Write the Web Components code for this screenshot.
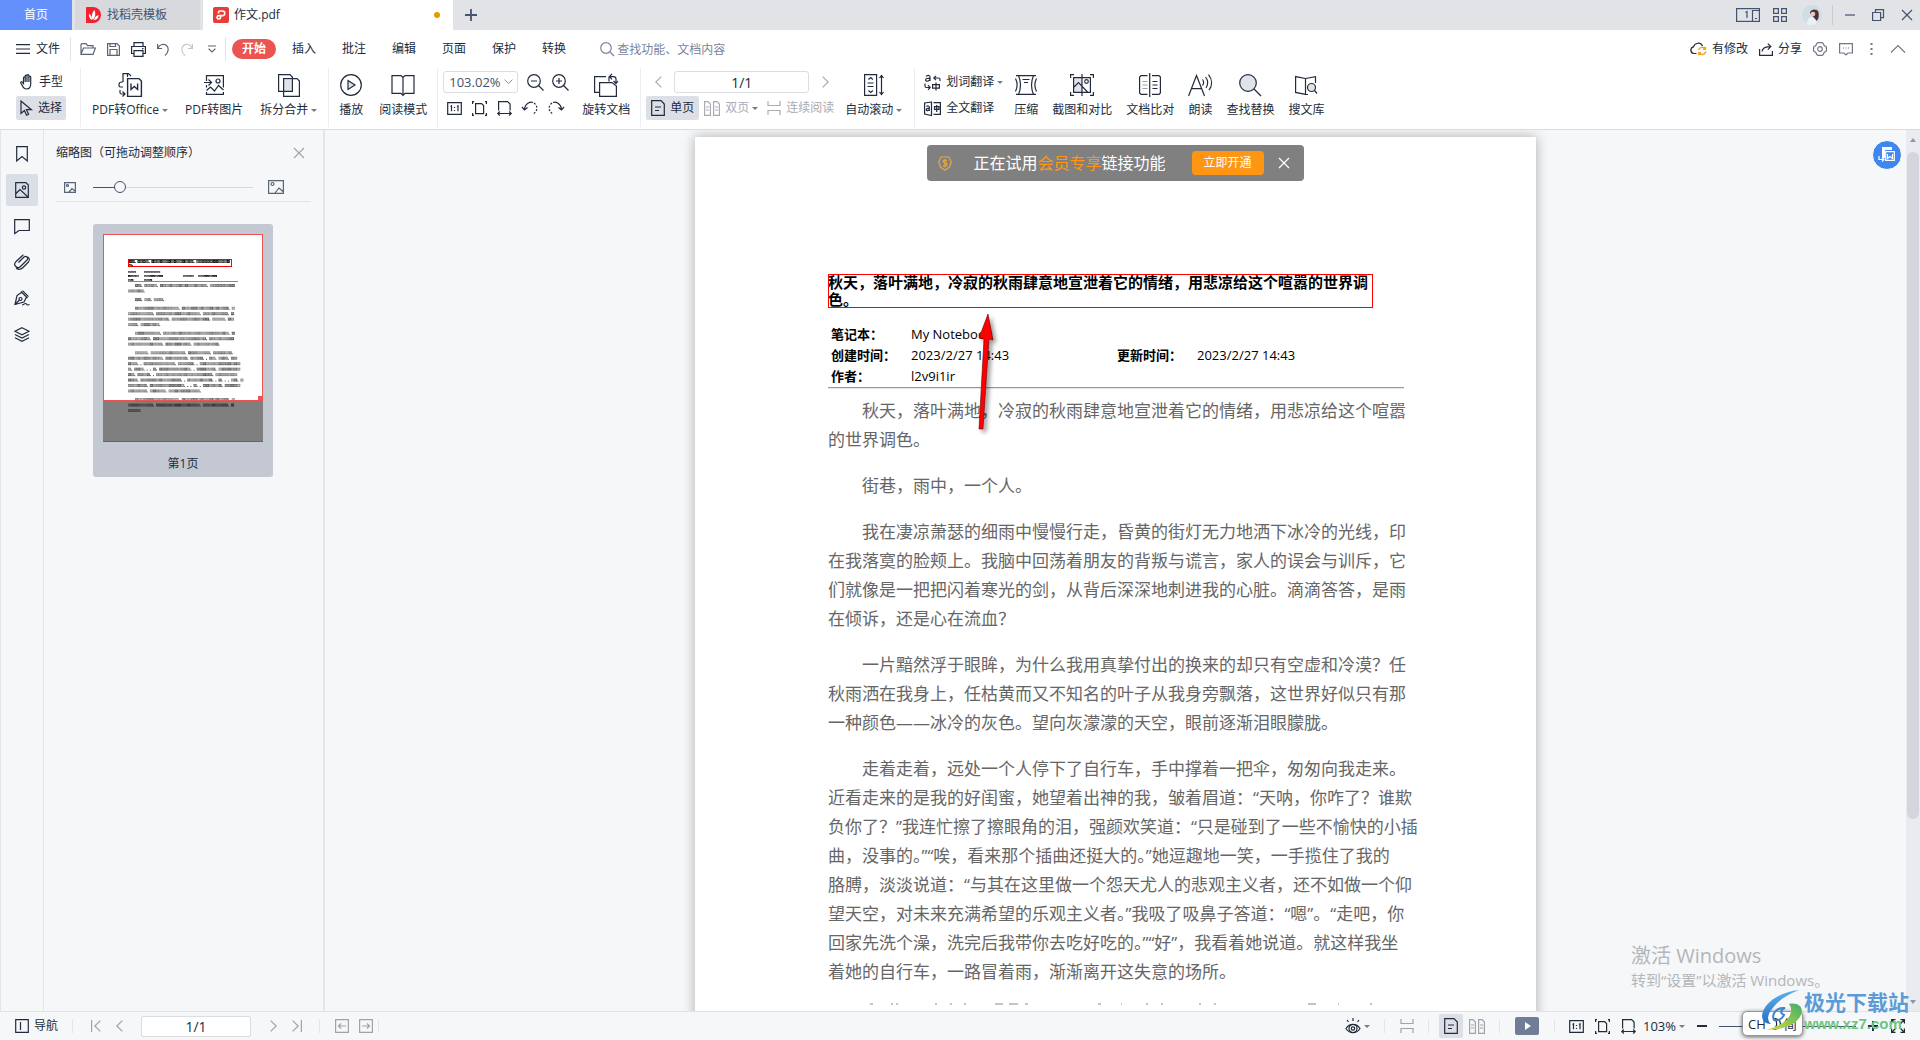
<!DOCTYPE html>
<html lang="zh-CN">
<head>
<meta charset="utf-8">
<title>作文.pdf</title>
<style>
html,body{margin:0;height:100%;overflow:hidden}
body{font:12px/16px "Open Sans","Noto Sans CJK SC",sans-serif;color:#222b3c;background:#f5f7f9}
</style>
</head>
<body>
<pdf-app></pdf-app>
<script>
const RESET = `*{box-sizing:border-box}
button,input,select{font:inherit;color:inherit;margin:0;padding:0;border:0;background:none;border-radius:0}
input,select{outline:0}`;

function define(tag, css, html, after) {
  customElements.define(tag, class extends HTMLElement {
    connectedCallback() {
      if (this.shadowRoot) return;
      const t = document.createElement('template');
      t.innerHTML = `<style>${RESET}${css}</style>${typeof html === 'function' ? html(this) : html}`;
      this.attachShadow({ mode: 'open' }).append(t.content.cloneNode(true));
      if (after) after(this.shadowRoot, this);
    }
  });
}

/* name: [width, height, drawing] */
const ICONS = {
  docer: [16,16,'<path d="M1 0h6a8 8 0 0 1 0 16H0V1a1 1 0 0 1 1-1z" fill="#f5222d" stroke="none"/><path d="M7 13C5 11 5.500 6 8.500 3c1.500 3 1 7-1.500 10zM6 13C3.500 12 2.500 9 3 6.500 5 8 6 10 6 13zM8 13c.5-2.500 2-4.500 4.500-5C12.500 11 10.500 13 8 13z" fill="#fff" stroke="none"/>'],
  pdf: [16,16,'<rect width="16" height="16" rx="2" fill="#e93c37" stroke="none"/><path d="M5.500 6.500v-1A1.500 1.500 0 0 1 7 4h2.500a2.300 2.300 0 0 1 0 4.600H5.800A1.700 1.700 0 1 0 7.500 10.300V8.600" stroke="#fff" stroke-width="1.600"/>'],
  plus: [12,12,'<path d="M6 0v12M0 6h12" stroke="#44536e" stroke-width="1.800"/>'],
  pages: [24,14,'<rect x=".6" y=".6" width="22.800" height="12.800"/><path d="M16.500 13.500v-11h6.500M19 10.500h2M9.500 4.500L11 3.500v6.500"/>'],
  grid: [14,14,'<path d="M.6.6h4.800v4.800H.6zM8.600.6h4.800v4.800H8.600zM.6 8.600h4.800v4.800H.6zM8.600 8.600h4.800v4.800H8.600z"/>'],
  avatar: [20,20,'<circle cx="10" cy="10" r="10" fill="#cfdde4" stroke="none"/><path d="M8 8c0-4 7-5 8.500-1 .5 4 .5 7-2 9l-3-4z" fill="#4b3138" stroke="none"/><circle cx="11" cy="9" r="2.300" fill="#eccabb" stroke="none"/><path d="M5 19c0-5 2-7 5-7l4 3 1 3a10 10 0 0 1-10 1z" fill="#e9f2f5" stroke="none"/><path d="M13 4h2v1h-2z" fill="#e2bb4b" stroke="none"/>'],
  min: [10,10,'<path d="M0 5h10"/>'],
  restore: [12,12,'<path d="M.6 3.500h8v8h-8zM3.500 3.500V.6h8v8H8.600"/>'],
  close: [10,10,'<path d="M0 0l10 10M10 0L0 10"/>'],
  menu: [14,10,'<path d="M0 .6h14M0 5h14M0 9.400h14"/>'],
  open: [16,12,'<path d="M1 11V1.500L2 .6h4l1.500 2H13v2.500M1 11l2.500-6H15.400L13 11.400H1z"/>'],
  save: [13,13,'<path d="M.6.6h9.400l2.400 2.400v9.400H.6zM3 12V6.500h7V12M3 .6v2.900h5.500V.6"/>'],
  print: [15,15,'<path d="M3 4.500V.6h9v3.900M3 11.500H.6v-7h13.800v7H12M3 8.600h9v5.800H3zM11 6.600h1.500"/>'],
  undo: [12,13,'<path d="M.6 1v4.500h4.500M1 5c2-4 6-4.500 8.500-2.500S12 9 8 12.500"/>'],
  redo: [12,13,'<path d="M11.400 1v4.500H6.900M11 5C9 1 5 .5 2.500 2.500S0 9 4 12.500"/>'],
  more: [8,8,'<path d="M0 1h8M.6 3.600L4 7l3.400-3.400"/>'],
  search: [14,14,'<circle cx="6" cy="6" r="5.300"/><path d="M10 10l4 4"/>'],
  cloud: [17,14,'<path d="M6.500 11.500H4A3.400 3.400 0 0 1 3.500 4.800 4.800 4.800 0 0 1 12.500 4"/><path d="M8.500 8a3.800 3.800 0 0 1 6.800-1M15.500 4.800V7.300H13M15.800 9.500a3.800 3.800 0 0 1-6.800 1.500M8.800 13.300v-2.500h2.400" stroke="#f5a51c" stroke-width="1.400"/>'],
  share: [14,13,'<path d="M.6 6v6.400h12.800V8M3 8.500C3.500 5 6 3.600 11.500 3.600M8.800.6l3 3-3 3"/>'],
  gear: [14,14,'<path d="M4 1.200L5 .6h4l1 .6 1.200 2.300 2.200 1.500v4L11.200 10.500 10 12.800l-1 .6H5l-1-.6-1.200-2.300L.6 9V5l2.200-1.500z"/><circle cx="7" cy="7" r="2.300"/>'],
  chat: [14,13,'<path d="M.6.6h12.800v9.400H9l-2 2-2-2H.6zM4 5h1M6.500 5h1M9 5h1"/>'],
  dots: [3,12,'<path d="M.5 1h2M.5 6h2M.5 11h2" stroke-width="2"/>'],
  up: [14,8,'<path d="M0 7.500L7 .6l7 6.900"/>'],
  hand: [14,16,'<path d="M3.500 9.500V3.800c0-1 1.700-1 1.700 0V2c0-1.200 1.800-1.200 1.800 0v-.4c0-1.200 1.900-1.200 1.900 0V3c0-1 1.800-1 1.800 0v7c0 3-1.500 5-4.200 5-2 0-3-1-4-3L.8 9c-.4-1 1-1.700 1.700-.7zM5.200 3.800V8M7 2v6M8.900 3v5"/>'],
  cursor: [13,16,'<path d="M1 1v12.500l3.400-3 2.200 4.700 2-1-2.200-4.500h5z"/>'],
  office: [24,24,'<path d="M9.500 4V.6H5V9M5 9H3.500A2.500 2.500 0 0 0 1 11.500V13a2 2 0 0 0 2 1h2M13 3L10.500.6H8M2 17v2.500a1.500 1.500 0 0 0 1.500 1.500h3M4.500 18.500L7 21l-2.500 2.500" /><path d="M9.600 5.600H21l2.400 2.400v15.400H9.600zM13 10.500v6l3.300-3 3.300 3v-6" stroke-width="1.400"/>'],
  toimg: [20,20,'<path d="M2.500 6V.6h16.900v11.900M2.500 10v2.500M2.500 17v2.400h16.900V17M0 7.500h7M4.500 4.500l3 3-3 3M2.500 15.500l4-3.500 4 4 4-5.500 5 4.500"/><circle cx="14" cy="6" r="2"/>'],
  split: [24,24,'<path d="M7 7h8v11H7z" fill="#dfe3ea" stroke="none"/><path d="M1.600 1.600H13L15.400 4v14.400H1.600zM6.600 5.600H20L22.400 8v15.400H6.600z"/>'],
  play: [22,22,'<circle cx="11" cy="11" r="10.300"/><path d="M8 6.500L15 11l-7 4.500z" fill="#dfe3ea"/>'],
  read: [24,22,'<path d="M12 3.500L10 1.600H1v17.800h9l2 2 2-2h9V1.600h-9zM12 3.500v18"/>'],
  zoomout: [17,17,'<circle cx="7" cy="7" r="6.300"/><path d="M11.500 11.500l5 5M4 7h6"/>'],
  zoomin: [17,17,'<circle cx="7" cy="7" r="6.300"/><path d="M11.500 11.500l5 5M4 7h6M7 4v6"/>'],
  one: [15,13,'<path d="M.7.7h13.600v11.600H.7zM3.500 4.500l1-.6v5.300M10 4.500l1-.6v5.300M7.500 5v1M7.500 8v1"/>'],
  fit: [15,15,'<path d="M3.600 2.600h6l2 2v8h-8zM.6 3V.6H2M13 .6h1.400V3M.6 12v2.400H2M13 14.400h1.400V12"/>'],
  fitw: [15,15,'<path d="M1.600 9.500V.6h9l2.500 2.500v6.400M.6 12.500h13.800M2.800 10.500l-2 2 2 2M12.200 10.500l2 2-2 2"/>'],
  rotl: [16,14,'<path d="M2.500 8.500C3 2 8.500.6 11 1.500M0 6l2.500 3L5.500 6.500"/><path d="M12 2c4 3 4 8-1 11" stroke-dasharray="2 1.500"/>'],
  rotr: [16,14,'<path d="M13.500 8.500C13 2 7.500.6 5 1.500M16 6l-2.500 3-3-2.500"/><path d="M4 2c-4 3-4 8 1 11" stroke-dasharray="2 1.500"/>'],
  rotdoc: [24,24,'<path d="M5 19.400H.6V3.600H12M15 3.600v5M5.600 9.600H18L22.400 13v10.400H5.600zM16 3.600h3.500a2.500 2.500 0 0 1 2.500 2.500V10M18 .8l-2.500 2.800L18 6.400M19.500 8l2.500 2.500L24 8"/>'],
  prev: [7,12,'<path d="M6.400.6L.8 6l5.600 5.400"/>'],
  next: [7,12,'<path d="M.6.6L6.200 6 .6 11.400"/>'],
  first: [10,12,'<path d="M.6 0v12M9.400.6L3.800 6l5.600 5.400"/>'],
  last: [10,12,'<path d="M9.400 0v12M.6.6L6.200 6 .6 11.400"/>'],
  single: [14,16,'<path d="M.7.7H10L13.300 4v11.300H.7zM4 7h6M4 10.500h4"/>'],
  dual: [16,15,'<path d="M.6.6h3.400L6.400 3v11.400H.6zM9.600.6H13L15.400 3v11.400H9.600zM2 6h3M2 9h3M11 6h3M11 9h3"/>'],
  cont: [14,14,'<path d="M1 0v4.500h12V0M1 14V9.500h12V14"/>'],
  scroll: [20,22,'<path d="M.6.6h12v20.800H.6zM3.500 9h6M3.500 12.500h6M4.500 5.500l2.200-2 2.200 2M4.500 16.500l2.200 2 2.200-2M17.500 1.500v19M15.500 4l2-2.500 2 2.500M15.500 18l2 2.500 2-2.500"/>'],
  trans: [17,17,'<path d="M2 2.500C3 .8 6 .8 6 3v4M6 4.500C3.500 4 1.600 4.500 1.600 6c0 2 4 1.500 4.400-1M16 7V5.500A1.500 1.500 0 0 0 14.500 4H10M12 1.800L9.800 4 12 6.200M1 9.500V12a1.500 1.500 0 0 0 1.500 1.500H6M4 11.200l2.200 2.300L4 15.800M8.600 10.600h6.800v3.500H8.600zM12 8.500v8"/>'],
  trans2: [17,15,'<path d="M7.500 1L.6 2v11l6.900 1.500zM9.500 1.600h6.900v11.800H9.500M2.500 5.500c1-1 2.800-.5 2.800.8V10M5.300 7.500c-2-.3-3 .2-3 1.200 0 1.500 2.800 1.200 3-.7M10.500 5.600h4.400v2.800h-4.400zM12.700 4v7"/>'],
  zip: [24,22,'<path d="M2 1.600h20M2 20.400h20M4.500 1.600c2.500 6 2.500 13 0 18.800M19.500 1.600c-2.500 6-2.500 13 0 18.800M1.500 4.500c2 4 2 9 0 13M22.500 4.500c-2 4-2 9 0 13M8.500 5.500h7M10 8.500h4"/>'],
  shot: [24,22,'<path d="M3 4h9v15H3z" fill="#dfe3ea" stroke="none"/><path d="M.6 4V.6H4M20 .6h3.400V4M.6 18v3.400H4M20 21.400h3.400V18M3.600 3.600h16.800v14.800H3.600zM12 0v22M4 13l4.500-4.500 9.500 10"/><circle cx="16.500" cy="7.500" r="1.800"/>'],
  compare: [22,24,'<path d="M8.500 2.600H2l-1.400 1.400v16L2 21.400h6.500M13 2.600h7L21.400 4v16L20 21.400h-7M10.700 0v24"/><path d="M3.500 8.500h5M3.500 12h5M3.500 15.500h5" stroke="#9aa1ad"/><path d="M13.500 8.500h5M13.500 12h5M13.500 15.500h5"/>'],
  speak: [24,22,'<path d="M.6 22L8.500 1.500 16.500 22M3.500 14.600H14M14.500 5.500c1.500 2 1.500 4 0 6M17.500 3c2.800 3.500 2.800 7.500.5 11M20.500.6c4 5 4 11 .5 15.500"/>'],
  find: [22,22,'<circle cx="9" cy="9" r="8.300" fill="#dfe3ea"/><path d="M15 15l7 7"/>'],
  lib: [22,20,'<path d="M10.500 3.500L.6 1.600v15.800l9.900 2M10.500 3.500l10-1.900V8M10.500 3.500v16H13"/><circle cx="16.500" cy="12.500" r="4" fill="#dfe3ea"/><path d="M19.500 15.500l2.500 3"/>'],
  mark: [12,16,'<path d="M.7.7h10.600v14.300L6 10.500.7 15z"/>'],
  thumb: [14,16,'<path d="M.7.700H11l2.300 2.300v12.300H.7zM1 11.500L5 7.500l8 7.500"/><circle cx="9" cy="5.500" r="1.700"/>'],
  note: [16,15,'<path d="M.7.7h14.600v10.800H5L.7 14.500z"/>'],
  clip: [16,16,'<path d="M4.500 8.500l5.500-5.500a2 2 0 0 1 3 3l-6.500 6.500a3.300 3.300 0 0 1-4.700-4.700L8.500 1.500a3 3 0 0 1 1-.8M12 2.500c3 .5 4.500 3 2.500 5.500l-6 6c-2 2-5 1.500-6.500 0"/>'],
  pen: [16,16,'<path d="M7 1.500l6.500 6.500M8.500.6l6 6M7.500 2.500L3 5.500 1 14.500l9-2.500 2.500-5M1 14.500l4.500-4.500"/><circle cx="6.500" cy="9" r="1.500"/><path d="M8 15c2 0 2-1.500 3.500-1.500s1 1.500 2 1.500 1-.5 2-.5"/>'],
  layers: [16,15,'<path d="M8 .7l7 3.600-7 3.600-7-3.600zM1 7.500l7 3.600 7-3.600M1 10.700l7 3.600 7-3.600"/>'],
  pic: [12,11,'<path d="M.6.6h10.800v9.800H.6zM4.500 10.500l3.500-4 3 2.500" /><circle cx="3.500" cy="3.500" r="1"/>'],
  picbig: [16,14,'<path d="M.6.6h14.800v12.800H.6zM7 13l4-5 4 3.500"/><circle cx="4.500" cy="4" r="1.500"/>'],
  nav: [14,14,'<path d="M.7.7h12.600v12.600H.7zM5.500 3v8"/>'],
  back: [14,14,'<path d="M.6.6h12.800v12.800H.6zM11 7H3.500M6 4.500L3.500 7 6 9.500"/>'],
  fwd: [14,14,'<path d="M.6.6h12.800v12.800H.6zM3 7h7.500M8 4.500L10.500 7 8 9.500"/>'],
  eye: [16,16,'<path d="M1 10.500c3.500-5.500 10.500-5.500 14 0-3.500 5.500-10.500 5.500-14 0zM8 3V0M3.500 4L2 2M12.500 4L14 2"/><circle cx="8" cy="10.500" r="4"/><circle cx="8" cy="10.500" r="1.700"/>'],
  present: [24,18,'<rect width="24" height="18" rx="2" fill="#717c96" stroke="none"/><path d="M10 5l6 4-6 4z" fill="#fff" stroke="none"/>'],
  minus2: [10,10,'<path d="M0 5h10" stroke-width="2"/>'],
  plus2: [10,10,'<path d="M0 5h10M5 0v10" stroke-width="2"/>'],
  full: [14,14,'<path d="M.6 4.500V.6h3.900M9.500.6h3.900v3.900M.6 9.500v3.900h3.900M9.500 13.400h3.900V9.500M1 1l4 4M13 1L9 5M1 13l4-4M13 13L9 9"/>'],
  coin: [14,15,'<path d="M3 1h8l2.300 5-1.800 5L7 14.300 2.500 11 .7 6z"/><path d="M9 4.800C7.500 3.500 5 4 5.200 5.700c.3 1.600 3.600 1 3.700 2.700.1 1.700-2.500 2-3.900.8M7 3v8.500" stroke-width="1.300"/>'],
  swap: [18,16,'<path d="M4 0h10v3H7v8H4z" fill="#fff" stroke="none"/><path d="M7.700 4.700h8.600v8.600H7.700z" stroke="#fff"/><path d="M9.500 7v4.500l2.500-2 2.500 2V7M1 9v3.500h4M4 10.500l2 2-2 2" stroke="#fff"/>'],
  moon: [12,12,'<path d="M6 .6C9 1 11.400 3 11.400 6S9 11.400 5 11c2.500-1.500 4-6 1-10.400z"/>']
};
define('ui-icon', ':host{display:inline-flex;flex:none}svg{display:block;overflow:visible}', el => {
  const [w, h, d] = ICONS[el.getAttribute('name')];
  return `<svg width="${w}" height="${h}" viewBox="0 0 ${w} ${h}" fill="none" stroke="currentColor" stroke-width="1.200" aria-hidden="true">${d}</svg>`;
});
define('ui-sep', ':host{display:block;flex:none;width:1px;align-self:stretch;background:#e3e5ea}', '');
define('ui-caret', ':host{display:inline-block;flex:none;border:3px solid transparent;border-top:3px solid #717c96;border-bottom:0;margin-left:3px}', '');

/* Small button: icon and text in a row */
define('ui-button', `:host{display:flex;flex:none}
button{display:flex;align-items:center;gap:var(--gap,6px);height:24px;padding:0 var(--pad,0);white-space:nowrap;border-radius:2px}
:host([active]) button{background:#dce0e6}`,
  el => `<button type="button" aria-label="${el.getAttribute('label') || el.textContent.trim()}">${el.hasAttribute('icon') ? `<ui-icon name="${el.getAttribute('icon')}"></ui-icon>` : ''}<slot></slot></button>`);

/* Large ribbon button: icon above its caption */
define('ribbon-button', `:host{display:flex;flex:none}
button{display:flex;flex-direction:column;align-items:center;gap:5px;padding:5px 7px 0}
.i{display:flex;align-items:center;height:24px}
.l{display:flex;align-items:center;white-space:nowrap}`,
  el => `<button type="button"><span class="i"><ui-icon name="${el.getAttribute('icon')}"></ui-icon></span><span class="l"><slot></slot>${el.hasAttribute('menu') ? '<ui-caret></ui-caret>' : ''}</span></button>`);

define('tab-bar', `:host{display:flex;height:30px;background:#e2e3e7;color:#44536e}
.tab{display:flex;align-items:center;gap:5px;height:30px;text-align:left}
.home{width:72px;justify-content:center;background:#6490fb;color:#fff;margin-right:3px}
.docer{width:125px;padding-left:11px;background:#d8d9dd;margin-right:3px}
.doc{width:250px;padding:0 13px 0 10px;background:#fff;color:#222b3c}
.dot{width:6px;height:6px;border-radius:3px;background:#e79a00;margin-left:auto}
.add{padding:0 12px}
.win{display:flex;align-items:center;margin-left:auto;padding-right:8px}
.win button{display:flex}
ui-sep{height:20px;align-self:center;margin:0 12px 0 10px;background:#c9cbd1}`,
`<button class="tab home">首页</button>
<button class="tab docer"><ui-icon name="docer"></ui-icon>找稻壳模板</button>
<button class="tab doc"><ui-icon name="pdf"></ui-icon>作文.pdf<span class="dot"></span></button>
<button class="tab add" aria-label="新建"><ui-icon name="plus"></ui-icon></button>
<div class="win"><button aria-label="窗口" style="margin-right:13px"><ui-icon name="pages"></ui-icon></button><button aria-label="应用" style="margin-right:15px"><ui-icon name="grid"></ui-icon></button><button aria-label="账号"><ui-icon name="avatar"></ui-icon></button><ui-sep></ui-sep>
<button aria-label="最小化" style="margin-right:17px"><ui-icon name="min"></ui-icon></button><button aria-label="还原" style="margin-right:18px"><ui-icon name="restore"></ui-icon></button><button aria-label="关闭"><ui-icon name="close"></ui-icon></button></div>`);

define('menu-bar', `:host{display:flex;align-items:center;height:38px;padding:0 15px 0 16px;background:#fff}
ui-sep{height:24px;align-self:center}
.quick{display:flex;align-items:center;gap:11px;margin:0 9px;color:#5a6477}
.quick ui-button:nth-child(3){color:#222b3c}
.quick ui-button:nth-child(5){color:#c3c6cc;margin-left:1px}
.quick ui-button:nth-child(6){margin-left:4px}
nav{display:flex;align-items:center;gap:26px}
nav button{white-space:nowrap}
.on{height:20px;padding:0 10px;border-radius:10px;background:#eb5451;color:#fff;font-weight:700;margin:0 -10px 0 6px}
.search{display:flex;align-items:center;gap:3px;margin-left:34px;color:#7a849b}
.search input{width:150px;height:20px}
.search input::placeholder{color:#7a849b;opacity:1}
.right{display:flex;align-items:center;margin-left:auto;gap:11px;--gap:5px}
.soft{display:flex;align-items:center;color:#717784}`,
`<ui-button icon="menu" style="margin-right:10px">文件</ui-button><ui-sep></ui-sep>
<div class="quick"><ui-button icon="open" label="打开"></ui-button><ui-button icon="save" label="保存"></ui-button><ui-button icon="print" label="打印"></ui-button><ui-button icon="undo" label="撤销"></ui-button><ui-button icon="redo" label="恢复"></ui-button><ui-button icon="more" label="更多"></ui-button></div><ui-sep></ui-sep>
<nav><button class="on">开始</button><button>插入</button><button>批注</button><button>编辑</button><button>页面</button><button>保护</button><button>转换</button></nav>
<label class="search"><ui-icon name="search"></ui-icon><input type="text" aria-label="查找" placeholder="查找功能、文档内容"></label>
<div class="right"><ui-button icon="cloud">有修改</ui-button><ui-button icon="share">分享</ui-button>
<div class="soft" style="gap:12px"><ui-button icon="gear" label="设置"></ui-button><ui-button icon="chat" label="反馈"></ui-button></div>
<div class="soft" style="gap:18px;margin-left:6px"><ui-button icon="dots" label="更多"></ui-button><ui-button icon="up" label="收起"></ui-button></div></div>`);

define('ribbon-bar', `:host{display:flex;height:62px;padding-left:16px;background:#fff;border-bottom:1px solid #d9dbdf}
ui-sep{background:#eceef1;margin-bottom:2px}
.col{display:flex;flex-direction:column;gap:2px;padding-top:2px}
.row{display:flex;align-items:center;height:24px}
.zoom{position:relative;display:flex;align-items:center;width:75px;height:22px;border:1px solid #dadde2;border-radius:3px;color:#44536e}
.zoom select{appearance:none;width:100%;height:18px;padding-left:5px;font-size:13px}
.zoom svg{position:absolute;right:4px;pointer-events:none}
.page{width:135px;height:22px;border:1px solid #dadde2;border-radius:3px;text-align:center;font-size:14px}
.off{color:#a9acb3}
ui-button{--gap:5px}`,
`<div class="col" style="margin-right:13px;--pad:4px"><ui-button icon="hand">手型</ui-button><ui-button icon="cursor" active>选择</ui-button></div><ui-sep></ui-sep>
<div style="display:flex;margin:0 4px;gap:3px"><ribbon-button icon="office" menu>PDF转Office</ribbon-button><ribbon-button icon="toimg">PDF转图片</ribbon-button><ribbon-button icon="split" menu>拆分合并</ribbon-button></div><ui-sep></ui-sep>
<div style="display:flex;margin:0 3px;gap:2px"><ribbon-button icon="play">播放</ribbon-button><ribbon-button icon="read">阅读模式</ribbon-button></div><ui-sep></ui-sep>
<div class="col" style="margin-left:5px"><div class="row"><label class="zoom"><select aria-label="缩放"><option>103.02%</option></select><svg width="9" height="6" fill="none" stroke="#8a919f"><path d="M.6.6l3.900 4 3.900-4"/></svg></label><ui-button icon="zoomout" label="缩小" style="margin:0 8px 0 9px"></ui-button><ui-button icon="zoomin" label="放大"></ui-button></div>
<div class="row" style="gap:10px;padding-left:4px"><ui-button icon="one" label="实际大小"></ui-button><ui-button icon="fit" label="适合页面"></ui-button><ui-button icon="fitw" label="适合宽度"></ui-button><ui-button icon="rotl" label="向左旋转"></ui-button><ui-button icon="rotr" label="向右旋转"></ui-button></div></div>
<div style="display:flex;margin:0 3px 0 6px"><ribbon-button icon="rotdoc">旋转文档</ribbon-button></div><ui-sep></ui-sep>
<div class="col" style="margin-left:5px"><div class="row off" style="padding-left:9px"><ui-button icon="prev" label="上一页"></ui-button><input class="page" style="margin:0 13px 0 12px;color:#222b3c" aria-label="页码" value="1/1"><ui-button icon="next" label="下一页"></ui-button></div>
<div class="row"><ui-button icon="single" active style="--pad:5px">单页</ui-button><ui-button class="off" icon="dual" style="margin-left:5px">双页</ui-button><ui-caret></ui-caret><ui-button class="off" icon="cont" style="margin-left:9px">连续阅读</ui-button></div></div>
<div style="display:flex;margin:0 5px 0 4px"><ribbon-button icon="scroll" menu>自动滚动</ribbon-button></div><ui-sep></ui-sep>
<div class="col" style="margin:0 4px 0 9px"><div class="row"><ui-button icon="trans">划词翻译</ui-button><ui-caret></ui-caret></div><ui-button icon="trans2">全文翻译</ui-button></div>
<ribbon-button icon="zip">压缩</ribbon-button><ribbon-button icon="shot">截图和对比</ribbon-button><ribbon-button icon="compare">文档比对</ribbon-button><ribbon-button icon="speak">朗读</ribbon-button><ribbon-button icon="find">查找替换</ribbon-button><ribbon-button icon="lib">搜文库</ribbon-button>`);

define('nav-rail', `:host{display:flex;flex-direction:column;align-items:center;gap:4px;width:44px;flex:none;padding-top:8px;border:solid #e2e5ea;border-width:0 1px}
button{display:flex;align-items:center;justify-content:center;width:32px;height:32px;border-radius:2px}
.on{background:#dadee6}`,
 ['书签:mark','缩略图:thumb','批注:note','附件:clip','签名:pen','图层:layers'].map(s => { const [l, i] = s.split(':');
   return `<button aria-label="${l}"${i === 'thumb' ? ' class="on"' : ''}><ui-icon name="${i}"></ui-icon></button>`; }).join(''));

const TITLE = ['秋天，落叶满地，冷寂的秋雨肆意地宣泄着它的情绪，用悲凉给这个喧嚣的世界调', '色。'];
const PARAS = [
 ['秋天，落叶满地，冷寂的秋雨肆意地宣泄着它的情绪，用悲凉给这个喧嚣','的世界调色。'],
 ['街巷，雨中，一个人。'],
 ['我在凄凉萧瑟的细雨中慢慢行走，昏黄的街灯无力地洒下冰冷的光线，印','在我落寞的脸颊上。我脑中回荡着朋友的背叛与谎言，家人的误会与训斥，它','们就像是一把把闪着寒光的剑，从背后深深地刺进我的心脏。滴滴答答，是雨','在倾诉，还是心在流血？'],
 ['一片黯然浮于眼眸，为什么我用真挚付出的换来的却只有空虚和冷漠？任','秋雨洒在我身上，任枯黄而又不知名的叶子从我身旁飘落，这世界好似只有那','一种颜色——冰冷的灰色。望向灰濛濛的天空，眼前逐渐泪眼朦胧。'],
 ['走着走着，远处一个人停下了自行车，手中撑着一把伞，匆匆向我走来。','近看走来的是我的好闺蜜，她望着出神的我，皱着眉道：“天呐，你咋了？谁欺','负你了？”我连忙擦了擦眼角的泪，强颜欢笑道：“只是碰到了一些不愉快的小插','曲，没事的。”“唉，看来那个插曲还挺大的。”她逗趣地一笑，一手揽住了我的','胳膊，淡淡说道：“与其在这里做一个怨天尤人的悲观主义者，还不如做一个仰','望天空，对未来充满希望的乐观主义者。”我吸了吸鼻子答道：“嗯”。“走吧，你','回家先洗个澡，洗完后我带你去吃好吃的。”“好”，我看着她说道。就这样我坐','着她的自行车，一路冒着雨，渐渐离开这失意的场所。']
];

/* Miniature of the page: each character becomes a small block */
function miniature() {
  let s = '';
  const run = (text, x, y, w, color, h) => [...text].forEach((c, i) => {
    if ('，。？：“”'.includes(c)) s += `<rect x="${x + i * w}" y="${y + h - 1}" width="1" height="1" fill="${color}"/>`;
    else { const k = c.charCodeAt(0) % 4; s += `<rect x="${x + i * w}" y="${y}" width="${w}" height="${h}" fill="${color}" opacity="${[.62,.8,.7,.9][k]}"/><rect x="${x + i * w + .6}" y="${y + 1}" width="${w - 1.6}" height=".8" fill="#fff" opacity=".5"/>`; }
  });
  s += '<rect x="25.500" y="25.500" width="103" height="7" fill="none" stroke="red"/>';
  run(TITLE[0], 26, 26, 2.800, '#000', 3); run(TITLE[1], 26, 30, 2.800, '#000', 2);
  [['笔记本',25,37],['一一一一一一',41,37],['创建时间',25,41],['一二三四五六七',41,41],['更新时间',80,41],['一二三四五六七',95,41],['作者',25,45],['一二三',41,45]].forEach(a => run(a[0], a[1], a[2], 2.700, '#000', 2));
  s += '<path d="M25 47.500h110" stroke="#888"/>';
  let y = 50;
  [...PARAS, [PARAS[2][0], PARAS[2][1], '一一一一']].forEach(p => { p.forEach((l, i) => { run(l, i ? 25 : 32, y, 3.120, '#555', 3); y += 5.450; }); y += 3.200; });
  return s;
}
define('page-thumb', `:host{display:flex;flex-direction:column;align-items:center;width:180px;height:253px;padding-top:10px;background:#c4c8d3;border-radius:3px}
svg{display:block}
span{margin-top:14px}`, () => `<svg width="160" height="208" viewBox="0 0 160 208" role="img" aria-label="页面缩略图"><rect width="160" height="208" fill="#fff"/>${miniature()}<rect y="167" width="160" height="41" fill="#000" opacity=".5"/><path d="M0 207.500h160" stroke="#666"/><rect x=".5" y=".5" width="159" height="166" fill="none" stroke="#eb5451"/><path d="M155 162h5v5h-5z" fill="#eb5451"/></svg><span><slot></slot></span>`);

define('thumb-panel', `:host{display:flex;flex-direction:column;width:281px;flex:none;padding:13px 12px 0;border-right:2px solid #e2e5ea}
header{display:flex;align-items:center;justify-content:space-between;height:20px;padding-right:7px}
header button{display:flex;color:#a0a5af}
.size{display:flex;align-items:center;height:39px;padding:10px 27px 0 8px;border-bottom:1px solid #e2e5ea;color:#5a6477}
input{appearance:none;width:160px;height:12px;margin:0 15px 0 17px;background:linear-gradient(90deg,#44536e 22px,#d5d8de 22px) center/100% 1px no-repeat}
input::-webkit-slider-thumb{appearance:none;width:12px;height:12px;border-radius:6px;border:1px solid #44536e;background:#f5f7f9}
page-thumb{margin:22px auto 0 37px}`,
`<header>缩略图（可拖动调整顺序）<button aria-label="关闭"><ui-icon name="close"></ui-icon></button></header>
<div class="size"><ui-icon name="pic"></ui-icon><input type="range" min="0" max="100" value="14" aria-label="缩略图大小"><ui-icon name="picbig"></ui-icon></div>
<page-thumb>第1页</page-thumb>`);

define('doc-page', `:host{display:block;position:relative;width:841px;flex:none;padding:137px 132px 0 133px;background:#fff;box-shadow:0 0 12px rgba(0,0,0,.3);color:#000}
h1{width:545px;height:34px;margin:0;outline:1px solid red;outline-offset:-1px;font-size:15px;line-height:17px;font-weight:700;white-space:nowrap}
dl{display:grid;grid-template-columns:80px 206px 80px 1fr;margin:16px 0 0;padding-left:3px;font-size:13px;line-height:21px;white-space:nowrap}
dt{font-weight:700}dd{margin:0}
dd.wide{grid-column:2/5}
hr{height:2px;margin:0 0 7px;border:0;background:#999;border-bottom:1px solid #e6e6e6}
p{margin:0 0 17px;font-size:17px;line-height:29px;color:#666;text-indent:34px;white-space:nowrap}
.arrow{position:absolute;left:277px;top:175px;overflow:visible;filter:drop-shadow(3px 3px 2px rgba(0,0,0,.4))}
.next{display:block;margin:7px 0 60px 30px}`,
`<h1>${TITLE.join('<br>')}</h1>
<dl><dt>笔记本：</dt><dd class="wide">My Notebook</dd><dt>创建时间：</dt><dd>2023/2/27 14:43</dd><dt>更新时间：</dt><dd>2023/2/27 14:43</dd><dt>作者：</dt><dd class="wide">l2v9i1ir</dd></dl><hr>
${PARAS.map(p => `<p>${p.join('<br>')}</p>`).join('')}
<svg class="next" width="540" height="2"><path d="M12 1h3M33 1h2M38 1h2M77 1h2M92 1h2M106 1h2M137 1h8M151 1h9M167 1h3M240 1h3M263 1h1M288 1h2M303 1h2M341 1h2M356 1h2M450 1h8M480 1h1M512 1h2" stroke="#888"/></svg>
<svg class="arrow" width="24" height="118" aria-hidden="true"><path d="M16 2l5 26-4-1-6 90-4 0 5-90-5-1z" fill="red" stroke="#600" stroke-width=".6"/></svg>`);

define('trial-notice', `:host{display:flex;align-items:center;width:377px;height:36px;padding:0 15px 0 11px;background:#808080;border-radius:4px;color:#fff;font-size:16px}
ui-icon{color:#e5a63c}
span{margin:0 auto 0 22px;white-space:nowrap}
b{font-weight:400;color:#ff9613}
.go{width:72px;height:24px;border-radius:4px;background:#ff9613;font-size:12px}
.x{display:flex;margin-left:15px}.x ui-icon{color:#fff}`,
`<ui-icon name="coin"></ui-icon><span>正在试用<b>会员专享</b>链接功能</span><button class="go">立即开通</button><button class="x" aria-label="关闭"><ui-icon name="close"></ui-icon></button>`);

define('doc-view', `:host{display:flex;flex:1;min-width:0;position:relative;overflow:hidden}
.canvas{flex:1;display:flex;justify-content:center;align-items:flex-start;padding-top:7px;overflow:hidden;background:#f5f7f9}
trial-notice{position:absolute;top:15px;left:calc(50% - 196px)}
.fab{position:absolute;right:18px;top:10px;display:flex;align-items:center;justify-content:center;width:30px;height:30px;border-radius:15px;border:1px solid #fff;background:#3f86f0;box-shadow:0 0 2px #fff}
.bar{display:flex;flex-direction:column;align-items:center;width:14px;padding:8px 0 7px;background:#e9ebf0}
.bar i{border:3px solid transparent}
.u{border-bottom:4px solid #8d95aa!important;border-top:0!important}
.d{border-top:4px solid #8d95aa!important;border-bottom:0!important;margin-top:auto}
.t{width:12px;height:77%;margin-top:10px;border-radius:6px;background:#d3d6de}
.act{position:absolute;left:calc(100% - 289px);bottom:21px;color:#b3b6ba;white-space:nowrap;font-size:15px;line-height:20px}
.act strong{display:block;font-weight:400;font-size:20px;line-height:28px}`,
`<div class="canvas"><doc-page></doc-page></div><div class="bar"><i class="u"></i><div class="t"></div><i class="d"></i></div>
<trial-notice></trial-notice><button class="fab" aria-label="转换"><ui-icon name="swap"></ui-icon></button>
<div class="act"><strong>激活 Windows</strong>转到“设置”以激活 Windows。</div>`);

define('status-bar', `:host{display:flex;align-items:center;height:29px;flex:none;padding:0 15px;border-top:1px solid #e0e2e7;background:#f5f7f9}
ui-sep{height:14px;align-self:center}
.off{color:#a0a3aa}
.page{width:110px;height:21px;border:1px solid #dadde2;border-radius:2px;background:#fff;text-align:center;font-size:14px}
.right{display:flex;align-items:center;margin-left:auto}
.on{--pad:5px}
.r{appearance:none;width:137px;height:12px;margin:0 12px;background:linear-gradient(#44536e,#44536e) center/100% 1px no-repeat}
.r::-webkit-slider-thumb{appearance:none;width:12px;height:12px;border-radius:6px;border:1px solid #44536e;background:#fff}`,
`<ui-button icon="nav" style="margin-right:14px;--gap:5px">导航</ui-button><ui-sep></ui-sep>
<ui-button class="off" icon="first" label="第一页" style="margin:0 15px 0 18px"></ui-button><ui-button class="off" icon="prev" label="上一页"></ui-button>
<input class="page" style="margin:0 19px 0 18px" aria-label="当前页" value="1/1"><ui-button class="off" icon="next" label="下一页"></ui-button><ui-button class="off" icon="last" label="最后一页" style="margin:0 17px 0 15px"></ui-button><ui-sep></ui-sep>
<ui-button class="off" icon="back" label="后退" style="margin:0 10px 0 15px"></ui-button><ui-button class="off" icon="fwd" label="前进" style="margin-right:5px"></ui-button><ui-sep></ui-sep>
<div class="right"><ui-button icon="eye" label="护眼"></ui-button><ui-caret></ui-caret><ui-sep style="margin:0 15px 0 14px"></ui-sep><ui-button class="off" icon="cont" label="连续"></ui-button><ui-sep style="margin:0 10px 0 14px"></ui-sep>
<ui-button class="on" icon="single" label="单页" active></ui-button><ui-button class="off" icon="dual" label="双页" style="margin:0 14px 0 6px"></ui-button><ui-sep></ui-sep>
<ui-button icon="present" label="播放" style="margin:0 15px"></ui-button><ui-sep></ui-sep>
<ui-button icon="one" label="实际大小" style="margin:0 11px 0 14px"></ui-button><ui-button icon="fit" label="适合页面"></ui-button><ui-button icon="fitw" label="适合宽度" style="margin:0 7px 0 11px"></ui-button><ui-button style="--gap:0px;font-size:13px">103%</ui-button><ui-caret></ui-caret>
<ui-button icon="minus2" label="缩小" style="margin-left:12px"></ui-button><input class="r" type="range" aria-label="缩放比例" value="40"><ui-button icon="plus2" label="放大"></ui-button><ui-button icon="full" label="全屏" style="margin-left:13px"></ui-button></div>`);

define('ime-badge', `:host{position:absolute;right:117px;bottom:4px;display:flex;align-items:center;justify-content:center;gap:3px;width:61px;height:25px;border:1px solid #999;border-radius:5px;background:#fff;box-shadow:0 1px 4px rgba(0,0,0,.6);font-size:13px}`,
`<span>CH</span><ui-icon name="moon"></ui-icon><span>简</span>`);
define('site-mark', `:host{position:absolute;right:11px;bottom:7px;display:flex;pointer-events:none;white-space:nowrap}
.n{font-size:21px;line-height:26px;font-weight:700;color:#5b9bd8}
.w{font:700 15px/18px "Liberation Sans",sans-serif;color:#6fc47e}`,
`<svg width="42" height="42" viewBox="0 0 42 42" aria-hidden="true"><defs><linearGradient id="b" x2="0" y2="1"><stop stop-color="#5bb4ee"/><stop offset="1" stop-color="#2a6fc4"/></linearGradient><linearGradient id="g" x1="1" x2="0" y2="1"><stop stop-color="#3fae6a"/><stop offset="1" stop-color="#d8dc3c"/></linearGradient></defs>
<path d="M37 1C18 3 1 14 0 27c0 5 4 8 9 8-4-3-4-9 1-15C16 12 24 6 37 1z" fill="url(#b)"/><path d="M27 15c10-2 15 4 12 11C35 35 22 41 4 41c11-3 21-8 24-15 2-5 1-8-1-11z" fill="url(#g)"/><path d="M12 31c-3-6 3-13 11-12-5 2-5 5-1 7-2 4-6 6-10 5z" fill="none" stroke="#3f86cf" stroke-width="2"/></svg>
<div><div class="n">极光下载站</div><div class="w">www.xz7.com</div></div>`);

define('pdf-app', `:host{display:flex;flex-direction:column;height:100vh;position:relative}
main{flex:1;display:flex;min-height:0}`,
`<tab-bar></tab-bar><menu-bar></menu-bar><ribbon-bar></ribbon-bar>
<main><nav-rail></nav-rail><thumb-panel></thumb-panel><doc-view></doc-view></main>
<status-bar></status-bar><ime-badge></ime-badge><site-mark></site-mark>`);
</script>
</body>
</html>
